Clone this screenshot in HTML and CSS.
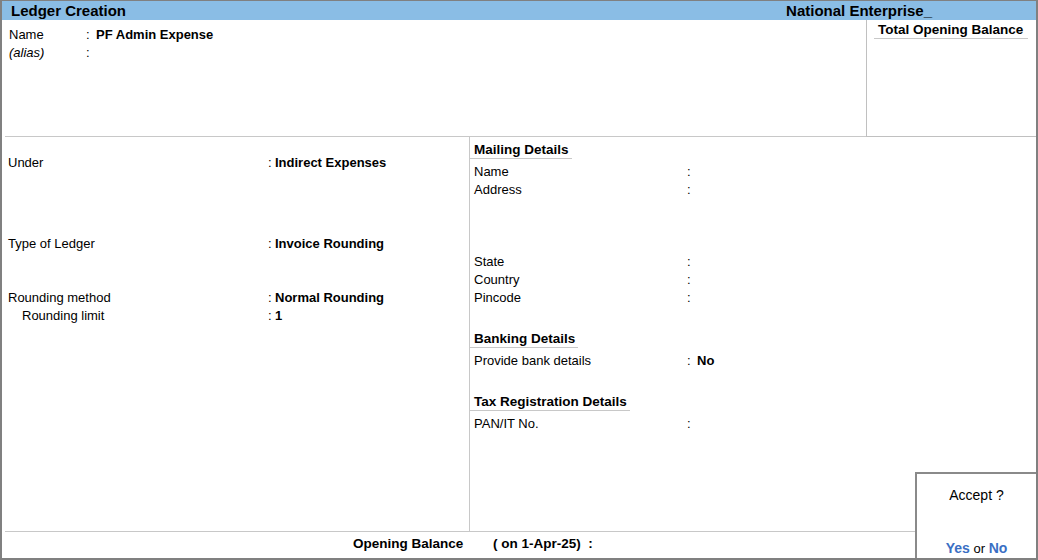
FILE: index.html
```html
<!DOCTYPE html>
<html lang="en">
<head>
    <meta charset="UTF-8">
    <title>Ledger Creation</title>
    <link rel="stylesheet" href="styles.css">
</head>
<body>
    <div class="screen">

        <!-- Шапка -->
        <div class="title-bar">
            <span class="title">Ledger Creation</span>
            <span class="company">National Enterprise_</span>
        </div>

        <!-- Имя и общий остаток -->
        <div class="top">
            <div class="name-area">
                <div class="row">
                    <span class="lbl-name">Name</span>
                    <span class="colon-name">:</span>
                    <span class="val">PF Admin Expense</span>
                </div>
                <div class="row">
                    <span class="lbl-name alias">(alias)</span>
                    <span class="colon-name">:</span>
                </div>
            </div>
            <div class="total-box">
                <div class="heading total-heading">Total Opening Balance</div>
            </div>
        </div>

        <div class="body">
            <!-- Левая колонка -->
            <div class="left-col">
                <div class="row under">
                    <span class="lbl">Under</span>
                    <span class="colon">:</span>
                    <span class="val">Indirect Expenses</span>
                </div>
                <div class="row type">
                    <span class="lbl">Type of Ledger</span>
                    <span class="colon">:</span>
                    <span class="val">Invoice Rounding</span>
                </div>
                <div class="row method">
                    <span class="lbl">Rounding method</span>
                    <span class="colon">:</span>
                    <span class="val">Normal Rounding</span>
                </div>
                <div class="row">
                    <span class="lbl sub">Rounding limit</span>
                    <span class="colon">:</span>
                    <span class="val">1</span>
                </div>
            </div>

            <!-- Правая колонка -->
            <div class="right-col">
                <div class="heading">Mailing Details</div>
                <div class="row">
                    <span class="lbl-r">Name</span>
                    <span class="colon-r">:</span>
                </div>
                <div class="row address">
                    <span class="lbl-r">Address</span>
                    <span class="colon-r">:</span>
                </div>
                <div class="row">
                    <span class="lbl-r">State</span>
                    <span class="colon-r">:</span>
                </div>
                <div class="row">
                    <span class="lbl-r">Country</span>
                    <span class="colon-r">:</span>
                </div>
                <div class="row">
                    <span class="lbl-r">Pincode</span>
                    <span class="colon-r">:</span>
                </div>

                <div class="heading section">Banking Details</div>
                <div class="row">
                    <span class="lbl-r">Provide bank details</span>
                    <span class="colon-r">:</span>
                    <span class="val">No</span>
                </div>

                <div class="heading section">Tax Registration Details</div>
                <div class="row">
                    <span class="lbl-r">PAN/IT No.</span>
                    <span class="colon-r">:</span>
                </div>
            </div>
        </div>

        <!-- Нижняя строка -->
        <div class="footer">
            <span class="opening">Opening Balance</span>
            <span class="opening-date">( on 1-Apr-25) &nbsp;:</span>
        </div>

        <!-- Окно подтверждения -->
        <div class="accept-box">
            <div class="accept-q">Accept ?</div>
            <div class="accept-a"><span class="yes">Yes</span> or <span class="no">No</span></div>
        </div>
    </div>
</body>
</html>
```

FILE: styles.css
```css
/* Базовые стили */
body {
    margin: 0;
    font-family: 'Liberation Sans', Arial, sans-serif;
    font-size: 13px;
    color: #000;
    background: #fff;
}

.screen {
    position: relative;
    width: 1038px;
    height: 560px;
    box-sizing: border-box;
    border: 2px solid #808080;
    border-top-width: 1px;
    overflow: hidden;
}

/* Шапка */
.title-bar {
    display: flex;
    justify-content: space-between;
    height: 19px;
    line-height: 19px;
    background-color: #8abde5;
    font-size: 15px;
    font-weight: bold;
    padding-left: 9px;
}

.company {
    margin-right: 104px;
}

/* Верхний блок */
.top {
    display: flex;
    height: 117px;
    box-sizing: border-box;
}

.name-area {
    flex: 1;
    margin-left: 3px;
    padding: 6px 4px;
    border-bottom: 1px solid #c8c8c8;
}

.total-box {
    width: 170px;
    box-sizing: border-box;
    border-left: 1px solid #c0c0c0;
    border-bottom: 1px solid #c0c0c0;
    padding-top: 2px;
}

.row {
    display: flex;
    line-height: 18px;
    white-space: nowrap;
}

.lbl-name {
    width: 77px;
}

.alias {
    font-style: italic;
}

.colon-name {
    width: 10px;
}

.val {
    font-weight: bold;
}

/* Заголовки разделов */
.heading {
    display: table;
    font-size: 13.5px;
    font-weight: bold;
    line-height: 16px;
    margin-left: -4px;
    padding: 0 3px 0 4px;
    border-bottom: 1px solid #c8c8c8;
    margin-bottom: 4px;
}

.total-heading {
    margin-left: 7px;
    padding-right: 5px;
}

/* Основная часть */
.body {
    display: flex;
    height: 394px;
}

.left-col {
    width: 465px;
    box-sizing: border-box;
    margin-left: 3px;
    padding: 17px 0 0 3px;
    border-right: 1px solid #c8c8c8;
}

.lbl {
    width: 260px;
}

.lbl.sub {
    width: 246px;
    padding-left: 14px;
}

.colon {
    width: 7px;
}

.type {
    margin-top: 63px;
}

.method {
    margin-top: 36px;
}

.right-col {
    flex: 1;
    padding: 5px 0 0 4px;
}

.lbl-r {
    width: 213px;
}

.colon-r {
    width: 10px;
}

.address {
    margin-bottom: 54px;
}

.section {
    margin-top: 24px;
}

/* Нижняя строка */
.footer {
    margin-left: 3px;
    height: 27px;
    box-sizing: border-box;
    border-top: 1px solid #c8c8c8;
    line-height: 24px;
    font-size: 13.5px;
    font-weight: bold;
    padding-left: 348px;
}

.opening-date {
    margin-left: 26px;
}

/* Подтверждение */
.accept-box {
    position: absolute;
    right: 0;
    bottom: 0;
    width: 121px;
    height: 86px;
    box-sizing: border-box;
    background: #fff;
    border-top: 2px solid #8a8a8a;
    border-left: 2px solid #8a8a8a;
    text-align: center;
    font-size: 14px;
}

.accept-q {
    margin-top: 12px;
    line-height: 18px;
}

.accept-a {
    margin-top: 35px;
    line-height: 18px;
    font-size: 13px;
}

.yes, .no {
    color: #3a6fc4;
    font-weight: bold;
    font-size: 14px;
}
```
